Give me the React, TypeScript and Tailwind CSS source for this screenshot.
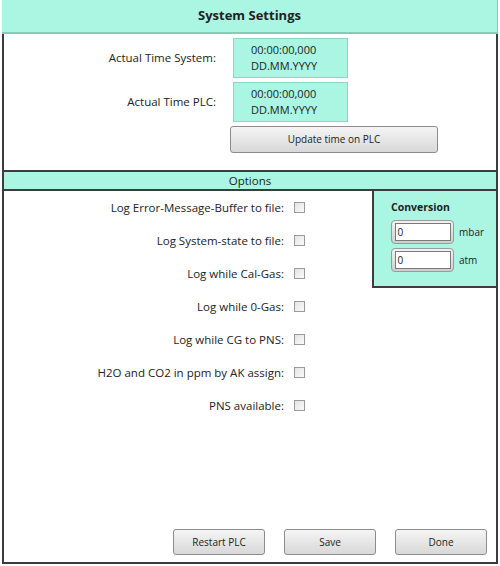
import { FC } from 'react';

const teal = 'bg-[#aaf6e2]';

const TimeBox: FC = () => (
  <div className={`flex h-[40px] w-[115px] flex-col justify-center border border-[#8fd6c0] ${teal} pl-[17px] text-[11px] leading-[16px] text-[#222]`}>
    <span>00:00:00,000</span>
    <span>DD.MM.YYYY</span>
  </div>
);

const GrayButton: FC<{ label: string; className?: string }> = ({ label, className }) => (
  <button
    type="button"
    className={`flex items-center justify-center rounded-[3px] border border-[#8c8c8c] bg-gradient-to-b from-[#f5f5f5] to-[#d8d8d8] text-[10px] text-[#222] ${className ?? ''}`}
  >
    {label}
  </button>
);

const CheckRow: FC<{ label: string }> = ({ label }) => (
  <div className="flex h-[33px] items-center justify-end gap-[10px]">
    <span>{label}</span>
    <span className="h-[11px] w-[11px] border border-[#9a9a9a] bg-gradient-to-br from-[#e4e4e4] to-[#fafafa]" />
  </div>
);

const NumInput: FC<{ unit: string }> = ({ unit }) => (
  <div className="flex items-center gap-[5px]">
    <div className="flex h-[24px] w-[63px] items-center justify-center rounded-[4px] border border-[#9a9a9a] bg-gradient-to-b from-[#f2f2f2] to-[#cfcfcf]">
      <div className="flex h-[18px] w-[56px] items-center border border-[#7a7a7a] bg-white pl-[2px] text-[10px] text-[#222]">0</div>
    </div>
    <span className="text-[10px] text-[#222]">{unit}</span>
  </div>
);

const options = [
  'Log Error-Message-Buffer to file:',
  'Log System-state to file:',
  'Log while Cal-Gas:',
  'Log while 0-Gas:',
  'Log while CG to PNS:',
  'H2O and CO2 in ppm by AK assign:',
  'PNS available:',
];

const App: FC = () => {
  return (
    <div
      className="flex h-[566px] w-[500px] flex-col bg-white px-[2px] pb-[2px] text-[11.5px] text-[#222]"
      style={{ fontFamily: '"Open Sans", "Noto Sans", sans-serif' }}
    >
      {/* Title */}
      <div className={`flex h-[34px] shrink-0 items-center justify-center border-b-2 border-r border-[#85ccb4] ${teal} text-[13px] font-bold`}>
        System Settings
      </div>

      <div className="flex flex-1 flex-col border-x-2 border-b-2 border-[#3c3c3c]">
        {/* Time section */}
        <div className="flex h-[136px] shrink-0 flex-col gap-[4px] pt-[4px]">
          <div className="flex items-center">
            <span className="w-[212px] text-right">Actual Time System:</span>
            <div className="ml-[17px]">
              <TimeBox />
            </div>
          </div>
          <div className="flex items-center">
            <span className="w-[212px] text-right">Actual Time PLC:</span>
            <div className="ml-[17px]">
              <TimeBox />
            </div>
          </div>
          <div className="flex">
            <GrayButton label="Update time on PLC" className="ml-[226px] h-[27px] w-[208px]" />
          </div>
        </div>

        {/* Options header */}
        <div className={`flex h-[21px] shrink-0 items-center justify-center border-y-2 border-[#3c3c3c] ${teal}`}>
          Options
        </div>

        {/* Options content */}
        <div className="flex flex-1 flex-col">
          <div className="flex flex-1">
            <div className="flex w-[301px] flex-col">
              {options.map((o) => (
                <CheckRow key={o} label={o} />
              ))}
            </div>
            <div className="flex-1" />
            <div className={`flex h-[97px] w-[124px] flex-col border-b-2 border-l-2 border-[#3c3c3c] ${teal} pl-[17px] pt-[8px]`}>
              <span className="text-[10.5px] font-bold leading-[16px]">Conversion</span>
              <div className="mt-[5px] flex flex-col gap-[4px]">
                <NumInput unit="mbar" />
                <NumInput unit="atm" />
              </div>
            </div>
          </div>

          {/* Bottom buttons */}
          <div className="flex justify-end gap-[19px] pb-[7px] pr-[9px]">
            <GrayButton label="Restart PLC" className="h-[26px] w-[92px]" />
            <GrayButton label="Save" className="h-[26px] w-[92px]" />
            <GrayButton label="Done" className="h-[26px] w-[92px]" />
          </div>
        </div>
      </div>
    </div>
  );
};

export default App;
